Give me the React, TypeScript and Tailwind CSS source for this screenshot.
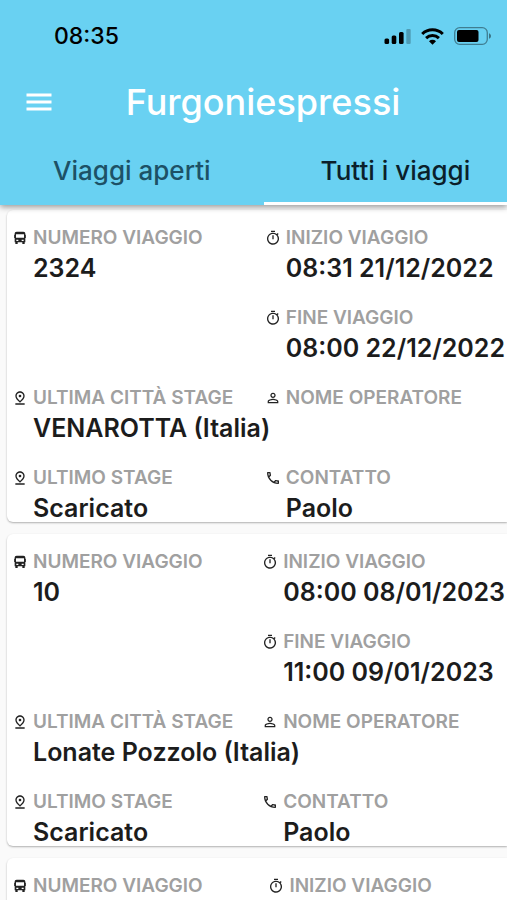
import { useState } from 'react'
import type { ReactNode } from 'react'
import { MdOutlinePhone, MdOutlinePinDrop, MdOutlineTimer, MdPersonOutline } from 'react-icons/md'

interface Trip {
  id: number
  number?: string
  start?: string
  details?: {
    end: string
    city: string
    stage: string
    operator: string
    contact: string
  }
}

const trips: Trip[] = [
  {
    id: 1,
    number: '2324',
    start: '08:31 21/12/2022',
    details: {
      end: '08:00 22/12/2022',
      city: 'VENAROTTA (Italia)',
      stage: 'Scaricato',
      operator: '',
      contact: 'Paolo',
    },
  },
  {
    id: 2,
    number: '10',
    start: '08:00 08/01/2023',
    details: {
      end: '11:00 09/01/2023',
      city: 'Lonate Pozzolo (Italia)',
      stage: 'Scaricato',
      operator: '',
      contact: 'Paolo',
    },
  },
  { id: 3 },
]

const tabs = ['Viaggi aperti', 'Tutti i viaggi']

function StatusBar() {
  return (
    <div className="flex h-[72px] items-center justify-between pr-4 pl-[54px] text-black">
      <span className="text-[23px] font-medium">08:35</span>
      <div className="flex items-center gap-[10px]">
        <svg className="h-[17px] w-[27px]" viewBox="0 0 27 17">
          <rect x="0.5" y="10.5" width="4.6" height="5.5" rx="1.5" />
          <rect x="7.7" y="7.5" width="4.6" height="8.5" rx="1.5" />
          <rect x="15" y="4" width="4.6" height="12" rx="1.5" />
          <rect x="22.3" y="1" width="4.4" height="15" rx="1" opacity="0.25" />
        </svg>
        <svg className="h-[17px] w-[23px]" viewBox="0 0 23 17" fill="none" stroke="currentColor" strokeWidth="3">
          <path d="M1.2 6a14.8 14.8 0 0 1 20.6 0" />
          <path d="M5.1 10.2a9.2 9.2 0 0 1 12.8 0" />
          <path d="M11.5 16.8 8 13.3a5 5 0 0 1 7 0Z" fill="currentColor" stroke="none" />
        </svg>
        <svg className="h-[18px] w-[37px]" viewBox="0 0 37 18">
          <rect x="0.7" y="0.7" width="32.6" height="16.6" rx="5" fill="none" stroke="currentColor" strokeWidth="1.3" opacity="0.4" />
          <rect x="3" y="3" width="21.5" height="12" rx="2" />
          <path d="M35 6.2c1.3.5 2 1.6 2 2.8s-.7 2.3-2 2.8Z" opacity="0.45" />
        </svg>
      </div>
    </div>
  )
}

function BusIcon() {
  return (
    <svg className="size-4" viewBox="0 0 24 24" fill="currentColor">
      <path
        fillRule="evenodd"
        d="M7 2.5h10c2 0 3 1 3 3V7h.8v5H20v6.5h-1V21h-3.5v-2.5h-7V21H5v-2.5H4V12h-.8V7H4V5.5c0-2 1-3 3-3ZM6 6.5v5h12v-5ZM6.500 14.5v2h3v-2ZM14.5 14.5v2h3v-2Z"
      />
    </svg>
  )
}

function Field({ icon, label, value }: { icon: ReactNode; label: string; value?: string }) {
  return (
    <div className="grid min-w-0 grid-cols-[16px_1fr] gap-x-[5px] whitespace-nowrap">
      <dt className="col-span-2 grid grid-cols-subgrid items-center text-[19px] leading-8 font-semibold text-[#a0a0a0]">
        <span className="text-base text-[#222222]">{icon}</span>
        {label}
      </dt>
      <dd className="col-start-2 h-7 text-[25px] leading-7 font-semibold text-[#1c1c1c]">{value}</dd>
    </div>
  )
}

function TripCard({ trip }: { trip: Trip }) {
  const { details } = trip

  return (
    <article className="rounded-l-md bg-white pt-3 pr-0.5 pl-[5px] shadow-[0_1px_2px_rgba(0,0,0,0.3)]">
      <dl className="grid grid-cols-[minmax(0,1fr)_minmax(48%,auto)] gap-y-5">
        <Field icon={<BusIcon />} label="NUMERO VIAGGIO" value={trip.number} />
        <Field icon={<MdOutlineTimer />} label="INIZIO VIAGGIO" value={trip.start} />
        {details && (
          <>
            <div className="col-start-2">
              <Field icon={<MdOutlineTimer />} label="FINE VIAGGIO" value={details.end} />
            </div>
            <Field icon={<MdOutlinePinDrop />} label="ULTIMA CITTÀ STAGE" value={details.city} />
            <Field icon={<MdPersonOutline />} label="NOME OPERATORE" value={details.operator} />
            <Field icon={<MdOutlinePinDrop />} label="ULTIMO STAGE" value={details.stage} />
            <Field icon={<MdOutlinePhone />} label="CONTATTO" value={details.contact} />
          </>
        )}
      </dl>
    </article>
  )
}

export default function App() {
  const [active, setActive] = useState(1)

  return (
    <div className="flex h-screen flex-col overflow-hidden bg-[#fafafa] font-['Inter',sans-serif]">
      {/* Header */}
      <header className="z-10 shrink-0 overflow-x-clip bg-[#69d1f2] shadow-[0_2px_6px_rgba(0,0,0,0.4)]">
        <StatusBar />
        <div className="grid h-[60px] grid-cols-[77px_1fr_58px] items-center text-white">
          <button aria-label="Menu" className="justify-self-center">
            <svg className="h-[18px] w-[26px]" viewBox="0 0 26 18" fill="currentColor">
              <rect x="0.5" y="0.5" width="25" height="3" />
              <rect x="0.5" y="7.5" width="25" height="3" />
              <rect x="0.5" y="14.5" width="25" height="3" />
            </svg>
          </button>
          <h1 className="text-center text-4xl font-medium">Furgoniespressi</h1>
        </div>
        <div className="grid grid-cols-[52%_52%]" role="tablist">
          {tabs.map((tab, i) => (
            <button
              key={tab}
              role="tab"
              aria-selected={active === i}
              onClick={() => setActive(i)}
              className={`h-[73px] border-b-[3px] pt-1.5 text-[26px] font-medium ${
                active === i ? 'border-white text-[#0b1f2b]' : 'border-transparent text-[#1d5166]'
              }`}
            >
              {tab}
            </button>
          ))}
        </div>
      </header>

      {/* Trips */}
      <main className="flex-1 space-y-3 overflow-hidden pt-[5px] pl-[7px]">
        {trips.map(trip => (
          <TripCard key={trip.id} trip={trip} />
        ))}
      </main>
    </div>
  )
}
